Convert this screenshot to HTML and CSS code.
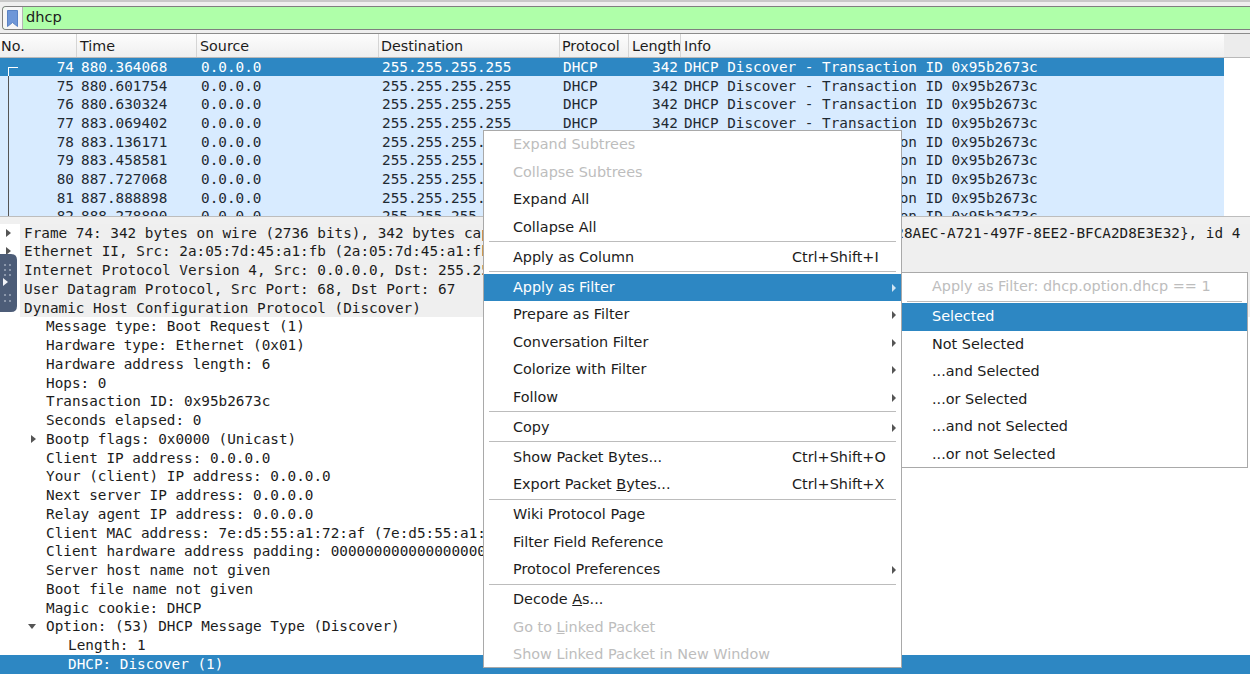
FILE: index.html
```html
<!DOCTYPE html>
<html lang="en">
<head>
<meta charset="utf-8">
<title>Wireshark</title>
<link rel="stylesheet" href="styles.css">
</head>
<body>
<div class="app">
  <div class="filter-bar">
    <div class="filter-input">
      <span class="bookmark"><svg width="11" height="17" viewBox="0 0 11 17"><path d="M0.5 0.5H10.5V16.5L5.5 12.5L0.5 16.5Z" fill="#6f97d8" stroke="#5a82c4"/></svg></span>
      <span class="filter-text">dhcp</span>
    </div>
  </div>

  <div class="packet-head">
    <div class="hc c-no">No.</div>
    <div class="hc c-time">Time</div>
    <div class="hc c-src">Source</div>
    <div class="hc c-dst">Destination</div>
    <div class="hc c-proto">Protocol</div>
    <div class="hc c-len">Length</div>
    <div class="hc c-info">Info</div>
    <div class="hc-rest"></div>
  </div>

  <div class="packet-list">
    <div class="packet-rows">
      <div class="pr selected"><span class="tree-h"></span><span class="c-no num">74</span><span class="c-time">880.364068</span><span class="c-src">0.0.0.0</span><span class="c-dst">255.255.255.255</span><span class="c-proto">DHCP</span><span class="c-len num">342</span><span class="c-info">DHCP Discover - Transaction ID 0x95b2673c</span></div>
      <div class="pr"><span class="tree-v"></span><span class="c-no num">75</span><span class="c-time">880.601754</span><span class="c-src">0.0.0.0</span><span class="c-dst">255.255.255.255</span><span class="c-proto">DHCP</span><span class="c-len num">342</span><span class="c-info">DHCP Discover - Transaction ID 0x95b2673c</span></div>
      <div class="pr"><span class="tree-v"></span><span class="c-no num">76</span><span class="c-time">880.630324</span><span class="c-src">0.0.0.0</span><span class="c-dst">255.255.255.255</span><span class="c-proto">DHCP</span><span class="c-len num">342</span><span class="c-info">DHCP Discover - Transaction ID 0x95b2673c</span></div>
      <div class="pr"><span class="tree-v"></span><span class="c-no num">77</span><span class="c-time">883.069402</span><span class="c-src">0.0.0.0</span><span class="c-dst">255.255.255.255</span><span class="c-proto">DHCP</span><span class="c-len num">342</span><span class="c-info">DHCP Discover - Transaction ID 0x95b2673c</span></div>
      <div class="pr"><span class="tree-v"></span><span class="c-no num">78</span><span class="c-time">883.136171</span><span class="c-src">0.0.0.0</span><span class="c-dst">255.255.255.255</span><span class="c-proto">DHCP</span><span class="c-len num">342</span><span class="c-info">DHCP Discover - Transaction ID 0x95b2673c</span></div>
      <div class="pr"><span class="tree-v"></span><span class="c-no num">79</span><span class="c-time">883.458581</span><span class="c-src">0.0.0.0</span><span class="c-dst">255.255.255.255</span><span class="c-proto">DHCP</span><span class="c-len num">342</span><span class="c-info">DHCP Discover - Transaction ID 0x95b2673c</span></div>
      <div class="pr"><span class="tree-v"></span><span class="c-no num">80</span><span class="c-time">887.727068</span><span class="c-src">0.0.0.0</span><span class="c-dst">255.255.255.255</span><span class="c-proto">DHCP</span><span class="c-len num">342</span><span class="c-info">DHCP Discover - Transaction ID 0x95b2673c</span></div>
      <div class="pr"><span class="tree-v"></span><span class="c-no num">81</span><span class="c-time">887.888898</span><span class="c-src">0.0.0.0</span><span class="c-dst">255.255.255.255</span><span class="c-proto">DHCP</span><span class="c-len num">342</span><span class="c-info">DHCP Discover - Transaction ID 0x95b2673c</span></div>
      <div class="pr"><span class="tree-v"></span><span class="c-no num">82</span><span class="c-time">888.278890</span><span class="c-src">0.0.0.0</span><span class="c-dst">255.255.255.255</span><span class="c-proto">DHCP</span><span class="c-len num">342</span><span class="c-info">DHCP Discover - Transaction ID 0x95b2673c</span></div>
    </div>
  </div>

  <div class="splitter"></div>

  <div class="details">
    <div class="dr top l0"><span class="arrow right"></span>Frame 74: 342 bytes on wire (2736 bits), 342 bytes captured (2736 bits) on interface \Device\NPF_{F7A28AEC-A721-497F-8EE2-BFCA2D8E3E32}, id 4</div>
    <div class="dr top l0"><span class="arrow right"></span>Ethernet II, Src: 2a:05:7d:45:a1:fb (2a:05:7d:45:a1:fb), Dst: Broadcast (ff:ff:ff:ff:ff:ff)</div>
    <div class="dr top l0"><span class="arrow right"></span>Internet Protocol Version 4, Src: 0.0.0.0, Dst: 255.255.255.255</div>
    <div class="dr top l0"><span class="arrow right"></span>User Datagram Protocol, Src Port: 68, Dst Port: 67</div>
    <div class="dr top l0"><span class="arrow down"></span>Dynamic Host Configuration Protocol (Discover)</div>
    <div class="dr l1">Message type: Boot Request (1)</div>
    <div class="dr l1">Hardware type: Ethernet (0x01)</div>
    <div class="dr l1">Hardware address length: 6</div>
    <div class="dr l1">Hops: 0</div>
    <div class="dr l1">Transaction ID: 0x95b2673c</div>
    <div class="dr l1">Seconds elapsed: 0</div>
    <div class="dr l1"><span class="arrow right a1"></span>Bootp flags: 0x0000 (Unicast)</div>
    <div class="dr l1">Client IP address: 0.0.0.0</div>
    <div class="dr l1">Your (client) IP address: 0.0.0.0</div>
    <div class="dr l1">Next server IP address: 0.0.0.0</div>
    <div class="dr l1">Relay agent IP address: 0.0.0.0</div>
    <div class="dr l1">Client MAC address: 7e:d5:55:a1:72:af (7e:d5:55:a1:72:af)</div>
    <div class="dr l1">Client hardware address padding: 00000000000000000000</div>
    <div class="dr l1">Server host name not given</div>
    <div class="dr l1">Boot file name not given</div>
    <div class="dr l1">Magic cookie: DHCP</div>
    <div class="dr l1"><span class="arrow down a1"></span>Option: (53) DHCP Message Type (Discover)</div>
    <div class="dr l2">Length: 1</div>
    <div class="dr l2 selected">DHCP: Discover (1)</div>
    <div class="dr l2">Option End: 255</div>
  </div>
</div>

<div class="handle">
  <svg width="17" height="58" viewBox="0 0 17 58">
    <path d="M0 0H11Q17 0 17 6V52Q17 58 11 58H0Z" fill="#4d5d78"/>
    <g fill="#8b97ab">
      <rect x="4" y="10" width="2" height="2"/><rect x="9" y="10" width="2" height="2"/>
      <rect x="4" y="15" width="2" height="2"/><rect x="9" y="15" width="2" height="2"/>
      <rect x="4" y="20" width="2" height="2"/><rect x="9" y="20" width="2" height="2"/>
      <rect x="4" y="40" width="2" height="2"/><rect x="9" y="40" width="2" height="2"/>
      <rect x="4" y="46" width="2" height="2"/><rect x="9" y="46" width="2" height="2"/>
    </g>
    <path d="M3 24L8 28L3 32Z" fill="#f2f4f8"/>
  </svg>
</div>

<div class="menu main-menu">
  <div class="mi disabled"><span>Expand Subtrees</span></div>
  <div class="mi disabled"><span>Collapse Subtrees</span></div>
  <div class="mi"><span>Expand All</span></div>
  <div class="mi"><span>Collapse All</span></div>
  <div class="sep"></div>
  <div class="mi"><span>Apply as Column</span><span class="key">Ctrl+Shift+I</span></div>
  <div class="sep"></div>
  <div class="mi active sub"><span>Apply as Filter</span></div>
  <div class="mi sub"><span>Prepare as Filter</span></div>
  <div class="mi sub"><span>Conversation Filter</span></div>
  <div class="mi sub"><span>Colorize with Filter</span></div>
  <div class="mi sub"><span>Follow</span></div>
  <div class="sep"></div>
  <div class="mi sub"><span>Copy</span></div>
  <div class="sep"></div>
  <div class="mi"><span>Show Packet Bytes...</span><span class="key">Ctrl+Shift+O</span></div>
  <div class="mi"><span>Export Packet <u>B</u>ytes...</span><span class="key">Ctrl+Shift+X</span></div>
  <div class="sep"></div>
  <div class="mi"><span>Wiki Protocol Page</span></div>
  <div class="mi"><span>Filter Field Reference</span></div>
  <div class="mi sub"><span>Protocol Preferences</span></div>
  <div class="sep"></div>
  <div class="mi"><span>Decode <u>A</u>s...</span></div>
  <div class="mi disabled"><span>Go to <u>L</u>inked Packet</span></div>
  <div class="mi disabled"><span>Show Linked Packet in New Window</span></div>
</div>

<div class="menu sub-menu">
  <div class="mi disabled"><span>Apply as Filter: dhcp.option.dhcp == 1</span></div>
  <div class="sep"></div>
  <div class="mi active"><span>Selected</span></div>
  <div class="mi"><span>Not Selected</span></div>
  <div class="mi"><span>...and Selected</span></div>
  <div class="mi"><span>...or Selected</span></div>
  <div class="mi"><span>...and not Selected</span></div>
  <div class="mi"><span>...or not Selected</span></div>
</div>
</body>
</html>
```
FILE: styles.css
```css
* { box-sizing: border-box; }
html, body { margin: 0; padding: 0; height: 100%; overflow: hidden; background: #fff; }
body { color: #1c1c1c; font-family: "DejaVu Sans", sans-serif; font-size: 14.4px; }
.app { display: flex; flex-direction: column; height: 677px; width: 1250px; overflow: hidden; }

.filter-bar { height: 34px; flex: none; background: #efefef; border-top: 2px solid #c9c9c9; border-bottom: 1px solid #8c8c8c; padding: 4px 0 3px 2px; }
.filter-input { display: flex; height: 24px; background: #afffa9; border: 1px solid #7f7f7f; border-right: 0; border-radius: 4px 0 0 4px; overflow: hidden; }
.bookmark { width: 20px; flex: none; background: #f6f6f6; border-right: 1px solid #b5b5b5; display: flex; align-items: center; justify-content: center; }
.filter-text { padding-left: 3px; line-height: 20px; font-size: 14.6px; }

.packet-head { height: 23.5px; flex: none; display: flex; background: linear-gradient(#fdfdfd, #efefef); border-bottom: 1px solid #b9b9b9; }
.hc { font-size: 14.3px; line-height: 24px; padding-left: 3px; border-right: 1px solid #d5d5d5; white-space: nowrap; overflow: hidden; }
.hc.c-no { padding-left: 1px; }
.hc.c-dst, .hc.c-proto { padding-left: 2px; }
.hc.c-info { border-right: 0; }
.hc-rest { flex: 1; background: #ececec; }

.c-no { width: 77px; flex: none; }
.c-time { width: 120px; flex: none; }
.c-src { width: 182px; flex: none; }
.c-dst { width: 181px; flex: none; }
.c-proto { width: 69px; flex: none; }
.c-len { width: 52px; flex: none; }
.c-info { width: 543px; flex: none; }

.packet-list { height: 158.5px; flex: none; overflow: hidden; background: #fff; font-family: "DejaVu Sans Mono", monospace; font-size: 14.33px; }
.packet-rows { width: 1224px; }
.pr { position: relative; height: 18.7px; display: flex; align-items: center; background: #d8ebff; white-space: pre; color: #1f2a33; }
.pr > span { padding-left: 4px; }
.pr > .c-dst, .pr > .c-proto, .pr > .c-info { padding-left: 3px; }
.pr .num { text-align: right; padding: 0 3px 0 0; }
.pr .c-len.num { padding-right: 3px; }
.pr.selected { background: #2d87c3; color: #fff; }
.tree-v, .tree-h { position: absolute; left: 8px; top: 0; padding: 0 !important; }
.tree-v { width: 1px; height: 100%; background: #555; }
.tree-h { top: 9px; width: 10px; height: 10px; border-left: 1px solid #fff; border-top: 1px solid #fff; }

.splitter { height: 7.5px; flex: none; background: #f0f0f0; border-top: 1px solid #bdbdbd; }

.details { flex: 1; overflow: hidden; font-family: "DejaVu Sans Mono", monospace; font-size: 14.33px; background: #fff; }
.dr { position: relative; height: 18.75px; line-height: 18.75px; white-space: pre; color: #1c1c1c; }
.dr.top { margin-left: 20px; padding-left: 4px; background: #efefef; }
.dr.l1 { padding-left: 46px; }
.dr.l2 { padding-left: 68px; }
.dr.selected { background: #2d87c3; color: #fff; }
.arrow { position: absolute; left: -14px; top: 5px; width: 0; height: 0; border-style: solid; }
.arrow.right { border-width: 4px 0 4px 5px; border-color: transparent transparent transparent #555; }
.arrow.down { left: -16px; top: 7px; border-width: 5px 4px 0 4px; border-color: #555 transparent transparent transparent; }
.arrow.a1 { left: 31px; }
.arrow.down.a1 { left: 28px; }

.handle { position: absolute; left: 0; top: 254px; width: 17px; height: 58px; line-height: 0; }

.menu { position: absolute; background: #fff; border: 1px solid #a9a9a9; font-family: "DejaVu Sans", sans-serif; font-size: 14.4px; color: #1c1c1c; }
.main-menu { left: 483px; top: 130px; width: 419px; height: 538px; }
.sub-menu { left: 901px; top: 272px; width: 347px; height: 196px; }
.mi { position: relative; height: 27.5px; line-height: 27px; padding: 0 16px 0 29px; display: flex; justify-content: space-between; white-space: pre; }
.sub-menu .mi { padding-left: 30px; }
.sep { height: 2.5px; margin: 0 5px; border-top: 1px solid #bcbcbc; }
.mi.disabled { color: #bdbdbd; }
.mi.active { background: #2d87c3; color: #fff; }
.mi.sub::after { content: ""; position: absolute; right: 5px; top: 10px; border-style: solid; border-width: 4px 0 4px 4px; border-color: transparent transparent transparent #555; }
.mi.active.sub::after { border-left-color: #cfe4f3; }
.key { width: 93px; flex: none; }
```
